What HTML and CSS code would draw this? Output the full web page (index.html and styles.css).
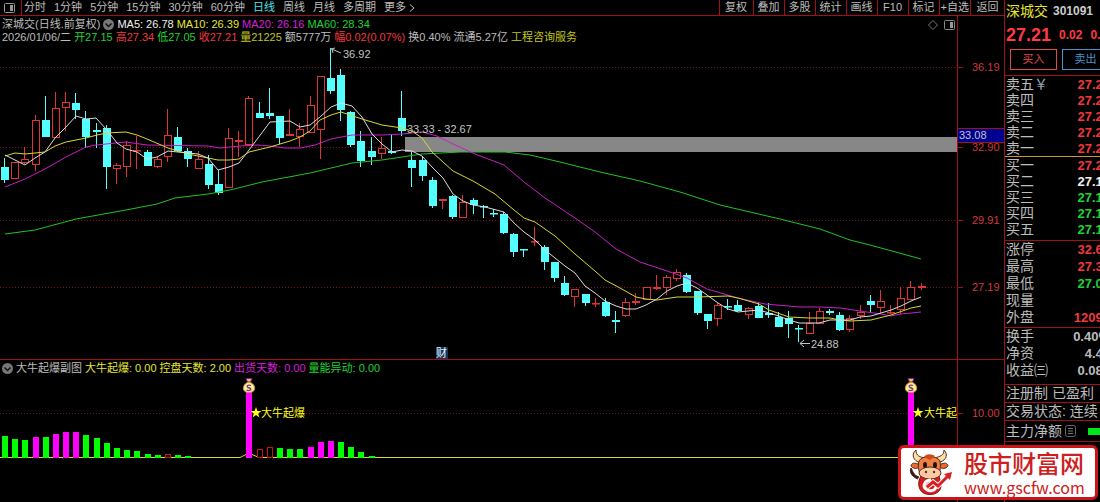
FILE: index.html
```html
<!DOCTYPE html>
<html lang="zh-CN">
<head>
    <meta charset="UTF-8">
    <meta name="viewport" content="width=device-width, initial-scale=1.0">
    <title>深城交 301091</title>
    <link rel="stylesheet" href="styles.css">
</head>
<body>

    <main class="main">
        <nav class="toolbar">
            <button class="panel-btn" aria-label="面板">
                <svg width="12" height="10" viewBox="0 0 12 10"><rect x="0.5" y="0.5" width="10" height="9" rx="1" fill="none" stroke="#999"/><rect x="6" y="2" width="3" height="6" fill="#999"/></svg>
            </button>
            <div class="periods">
                <button>分时</button>
                <button>1分钟</button>
                <button>5分钟</button>
                <button>15分钟</button>
                <button>30分钟</button>
                <button>60分钟</button>
                <button class="active">日线</button>
                <button>周线</button>
                <button>月线</button>
                <button>多周期</button>
                <button class="more">更多<svg width="6" height="8" viewBox="0 0 6 8"><path d="M1 0.5 L5 4 L1 7.5" fill="none" stroke="#bbb"/></svg></button>
            </div>
            <div class="tools">
                <button>复权</button>
                <button>叠加</button>
                <button>多股</button>
                <button>统计</button>
                <button>画线</button>
                <button>F10</button>
                <button>标记</button>
                <button>+自选</button>
                <button>返回</button>
            </div>
        </nav>

        <section class="chart">
            <div class="legend">
                <div class="legend-row">
                    <span>深城交(日线.前复权)</span>
                    <svg width="11" height="11" viewBox="0 0 11 11"><circle cx="5.5" cy="5.5" r="5.5" fill="#777"/><path d="M2.5 4.5 L5.5 7.5 L8.5 4.5" fill="none" stroke="#111" stroke-width="1.5"/></svg>
                    <span class="white">MA5: 26.78</span>
                    <span class="yellow">MA10: 26.39</span>
                    <span class="magenta">MA20: 26.16</span>
                    <span class="green">MA60: 28.34</span>
                </div>
                <div class="legend-row">
                    <span>2026/01/06/二</span>
                    <span class="green">开27.15</span>
                    <span class="red">高27.34</span>
                    <span class="green">低27.05</span>
                    <span class="red">收27.21</span>
                    <span class="olive">量21225</span>
                    <span>额5777万</span>
                    <span class="red">幅0.02(0.07%)</span>
                    <span>换0.40%</span>
                    <span>流通5.27亿</span>
                    <span class="olive">工程咨询服务</span>
                </div>
            </div>
            <svg class="plot" viewBox="0 16 1004 343">
                <g class="grid-lines">
                    <path d="M0 67.5H957M0 147.5H957M0 220.5H957M0 287.5H957"/>
                </g>
                <rect x="405" y="137" width="552" height="15" fill="#878787"/>
                <g id="candles"></g>
                <g id="averages"></g>
                <path class="note-line" d="M331.5 49 L341 53 M331 49 l4 -1 M332 49 l1 4"/>
                <text class="note" x="343" y="58">36.92</text>
                <text class="note" x="407" y="133">33.33 - 32.67</text>
                <path class="note-line" d="M800 343.5 H810 M804 340 L800 343.5 L804 347"/>
                <text class="note" x="811" y="348">24.88</text>
                <rect x="436" y="347" width="12" height="12" fill="#12365c"/>
                <text class="badge" x="436" y="357">财</text>
                <path d="M933 20.5 L937.5 25 L933 29.5 L928.5 25 Z" fill="none" stroke="#777"/>
                <rect x="944.5" y="20.5" width="10" height="9" rx="1" fill="none" stroke="#888"/>
                <rect x="950" y="22" width="3" height="6" fill="#999"/>
                <path class="axis-line" d="M957.5 16V359M958 67.5H963M958 147.5H963M958 220.5H963M958 287.5H963"/>
                <g class="axis-text">
                    <text x="972" y="71">36.19</text>
                    <text x="972" y="151">32.90</text>
                    <text x="972" y="224">29.91</text>
                    <text x="972" y="291">27.19</text>
                </g>
                <rect x="958" y="129" width="46" height="13" fill="#000090"/>
                <path class="axis-line" d="M958 128.5H1004M958 142.5H1004"/>
                <text class="note" x="959" y="139">33.08</text>
            </svg>
        </section>

        <section class="chart sub">
            <div class="legend">
                <div class="legend-row">
                    <svg width="11" height="11" viewBox="0 0 11 11"><circle cx="5.5" cy="5.5" r="5.5" fill="#777"/><path d="M2.5 4.5 L5.5 7.5 L8.5 4.5" fill="none" stroke="#111" stroke-width="1.5"/></svg>
                    <span>大牛起爆副图</span>
                    <span class="yellow">大牛起爆: 0.00</span>
                    <span class="yellow">控盘天数: 2.00</span>
                    <span class="magenta">出货天数: 0.00</span>
                    <span class="green">量能异动: 0.00</span>
                </div>
            </div>
            <svg class="plot" viewBox="0 360 1004 142">
                <defs>
                    <clipPath id="plot-clip"><rect x="0" y="360" width="957" height="142"/></clipPath>
                    <g id="bag">
                        <path d="M-3 0.5H3L1.5 4H-1.5Z" fill="#f5c542" stroke="#7b1fa2"/>
                        <path d="M-1.5 4.5 C-5 6 -6 9 -5.5 11.5 C-4.5 15.5 4.5 15.5 5.5 11.5 C6 9 5 6 1.5 4.5Z" fill="#ffe9a0" stroke="#c9962a"/>
                        <path d="M2 7.5 C-1 6.5 -3 8 -1 9.5 C1 10 3 11 1 12.2 C0 12.7 -1.5 12.5 -2.5 12" fill="none" stroke="#6a3b78" stroke-width="1.3"/>
                    </g>
                </defs>
                <g class="grid-lines"><path d="M0 413.5H957"/></g>
                <path d="M0 457.5H240L246 454.5H252L259 457.5H957" fill="none" stroke="#d8d830"/>
                <g id="bars"></g>
                <use href="#bag" x="249" y="378"/>
                <use href="#bag" x="911" y="378"/>
                <g class="signal" clip-path="url(#plot-clip)">
                    <path d="M256 407l1.4 4h4.1l-3.3 2.5 1.2 4-3.4-2.4-3.4 2.4 1.2-4-3.3-2.5h4.1z"/>
                    <text x="261" y="417">大牛起爆</text>
                    <path d="M918 407l1.4 4h4.1l-3.3 2.5 1.2 4-3.4-2.4-3.4 2.4 1.2-4-3.3-2.5h4.1z"/>
                    <text x="924" y="417">大牛起爆</text>
                </g>
                <path class="axis-line" d="M957.5 360V502M958 413.5H963"/>
                <g class="axis-text"><text x="972" y="417">10.00</text></g>
            </svg>
        </section>
    </main>

    <aside class="side">
        <div class="side-inner">
            <div class="stock"><span class="name">深城交</span><b>301091</b></div>
            <div class="price"><strong>27.21</strong><b>0.02</b><b>0.07%</b></div>
            <div class="trade">
                <button class="buy">买入</button>
                <button class="sell">卖出</button>
            </div>
            <dl class="book asks">
                <dt>卖五<i>￥</i></dt><dd class="red">27.26</dd>
                <dt>卖四</dt><dd class="red">27.25</dd>
                <dt>卖三</dt><dd class="red">27.24</dd>
                <dt>卖二</dt><dd class="red">27.23</dd>
                <dt>卖一</dt><dd class="red">27.22</dd>
            </dl>
            <dl class="book">
                <dt>买一</dt><dd class="red">27.21</dd>
                <dt>买二</dt><dd class="white">27.19</dd>
                <dt>买三</dt><dd class="green">27.18</dd>
                <dt>买四</dt><dd class="green">27.17</dd>
                <dt>买五</dt><dd class="green">27.16</dd>
            </dl>
            <dl class="book stats">
                <dt>涨停</dt><dd class="red">32.63</dd>
                <dt>最高</dt><dd class="red">27.34</dd>
                <dt>最低</dt><dd class="green">27.05</dd>
                <dt>现量</dt><dd></dd>
                <dt>外盘</dt><dd class="red">12093</dd>
            </dl>
            <dl class="book stats ratios">
                <dt>换手</dt><dd>0.40%</dd>
                <dt>净资</dt><dd>4.43</dd>
                <dt>收益㈢</dt><dd>0.083</dd>
            </dl>
            <p class="line">注册制 已盈利</p>
            <p class="line">交易状态: 连续</p>
            <p class="line flow">主力净额
                <svg width="12" height="12" viewBox="0 0 12 12"><rect x="0.5" y="0.5" width="10" height="11" rx="2" fill="none" stroke="#666"/><path d="M3 3.5H8M3 6H8M3 8.5H8" stroke="#777"/></svg>
                <span class="flow-bar"></span>
            </p>
        </div>
    </aside>

    <a class="brand" href="#">
        <svg width="46" height="48" viewBox="0 0 46 48">
            <path d="M9 30 C3 28 0 23 2 19 C4 22 4 26 10 28" fill="#3a1a12" stroke="#3a1a12"/>
            <path d="M9 13 C3 10 3 4 7 1 C7 7 11 8 16 9 L13 14Z" fill="#f7dfa8" stroke="#5a2a18"/>
            <path d="M31 13 C38 11 39 5 35 1 C35 7 31 7 26 9 L29 14Z" fill="#f7dfa8" stroke="#5a2a18"/>
            <path d="M9 15 C4 13 2 15 2 17 C4 20 8 20 11 18Z" fill="#e46b32" stroke="#5a2a18"/>
            <path d="M32 15 C37 13 39 15 39 17 C37 20 33 20 30 18Z" fill="#e46b32" stroke="#5a2a18"/>
            <path d="M12 27 C8 33 9 43 17 45 C25 47 33 43 32 35 L30 27Z" fill="#d51f1f" stroke="#8c1010"/>
            <path d="M10 12 C13 6 28 6 31 12 C32 18 31 22 30 25 L11 25 C9 20 9 16 10 12Z" fill="#f08040" stroke="#5a2a18"/>
            <path d="M15 8 C17 4 23 5 26 7 L21 11Z" fill="#c84a20"/>
            <ellipse cx="21" cy="24" rx="11" ry="6" fill="#fbc9a4" stroke="#5a2a18"/>
            <ellipse cx="16" cy="16" rx="2" ry="3" fill="#221111"/>
            <ellipse cx="26" cy="16" rx="2" ry="3" fill="#221111"/>
            <circle cx="17" cy="23" r="1.2" fill="#6b2a18"/><circle cx="25" cy="23" r="1.2" fill="#6b2a18"/>
            <path d="M22 31 C16 31 13 37 17 40 C20 43 26 42 27 38" fill="none" stroke="#fff" stroke-width="3"/>
            <path d="M18 38 L24 33 L29 37 L39 27" fill="none" stroke="#fff" stroke-width="5"/>
            <path d="M18 38 L24 33 L29 37 L39 27" fill="none" stroke="#d82020" stroke-width="3"/>
            <path d="M35 25 L43 23 L41 31Z" fill="#d82020"/>
        </svg>
        <span class="brand-text">
            <strong>股市财富网</strong>
            <span>www.gscfw.com</span>
        </span>
    </a>

    <script src="chart.js"></script>
</body>
</html>
```
FILE: styles.css
```css
* {
    box-sizing: border-box;
}

body {
    margin: 0;
    min-height: 100vh;
    display: grid;
    grid-template-columns: minmax(0, 1fr) 96px;
    background-color: #000;
    color: #bdbdbd;
    font-family: "Liberation Sans", "Noto Sans CJK SC", sans-serif;
    font-size: 11px;
    line-height: 13px;
    overflow: hidden;
    position: relative;
}

button {
    padding: 0;
    border: none;
    background: none;
    color: inherit;
    font: inherit;
    white-space: nowrap;
    cursor: pointer;
}

.white { color: #f0f0f0; }
.yellow { color: #e6e632; }
.olive { color: #c3c31e; }
.magenta { color: #d81ed8; }
.green { color: #1fd233; }
.red { color: #f0383e; }

/* toolbar */
.toolbar {
    display: flex;
    height: 16px;
    border-bottom: 1px solid #a01018;
}

.panel-btn {
    width: 22px;
    border-right: 1px solid #a01018;
    display: flex;
    align-items: center;
    padding-left: 4px;
}

.periods {
    flex: 1;
    display: flex;
    gap: 8px;
    padding-left: 2px;
}

.periods .active {
    color: #4fe3e6;
}

.more {
    display: flex;
    align-items: center;
    gap: 3px;
}

.tools {
    display: flex;
}

.tools button {
    min-width: 31px;
    border-left: 1px solid #a01018;
    padding: 0 1px;
}

.tools button:first-child,
.tools button:last-child {
    min-width: 34px;
}

/* charts */
.chart {
    position: relative;
}

.sub {
    border-top: 1px solid #a01018;
}

.plot {
    display: block;
    width: 100%;
    height: auto;
}

.legend {
    position: absolute;
    left: 2px;
    top: 2px;
    white-space: nowrap;
}

.legend-row {
    display: flex;
    align-items: center;
    gap: 3px;
}

.grid-lines {
    stroke: #7a1418;
    stroke-dasharray: 1 2;
}

.axis-line {
    stroke: #a01018;
    fill: none;
}

.axis-text {
    fill: #d0393f;
}

.note {
    fill: #c4c4c4;
}

.note-line {
    stroke: #c4c4c4;
    fill: none;
}

.badge {
    fill: #e8f4ff;
}

.signal {
    fill: #ffff1e;
}

.candle-up {
    fill: #000;
    stroke: #e03338;
}

.candle-down {
    fill: #54ffff;
    stroke: #54ffff;
}

.average {
    fill: none;
    stroke-width: 1;
}

/* quote panel */
.side {
    border-left: 1px solid #a01018;
    overflow: hidden;
}

.side-inner {
    width: 105px;
}

.stock {
    display: flex;
    align-items: center;
    gap: 5px;
    height: 23px;
    padding-left: 1px;
}

.stock .name {
    color: #e6e632;
    font-size: 14px;
}

.stock b {
    font-size: 12px;
    color: #ccc;
}

.price {
    display: flex;
    align-items: center;
    gap: 8px;
    height: 24px;
    padding-left: 1px;
    color: #ff3a40;
    font-size: 12px;
}

.price strong {
    font-size: 18px;
}

.trade {
    display: flex;
    gap: 5px;
    padding: 2px 0 5px 5px;
    border-bottom: 1px solid #a01018;
}

.trade button {
    flex: none;
    width: 47px;
    height: 21px;
    border: 1px solid;
}

.buy {
    color: #e0494c;
}

.sell {
    color: #4a90cc;
}

.book {
    display: grid;
    grid-template-columns: auto 1fr;
    grid-auto-rows: 16px;
    align-items: center;
    margin: 0;
    padding: 0 0 3px 1px;
    border-bottom: 1px solid #a01018;
    font-size: 14px;
}

.asks {
    padding-bottom: 0;
    border-color: #c89632;
}

.book i {
    font-style: normal;
    color: #9ab;
}

.book dd {
    margin: 0;
    text-align: right;
    font-size: 13px;
    font-weight: bold;
}

.stats {
    grid-auto-rows: 17px;
    padding-bottom: 1px;
}

.ratios {
    padding-bottom: 5px;
}

.line {
    margin: 0;
    height: 18px;
    padding-left: 1px;
    border-bottom: 1px solid #a01018;
    font-size: 14px;
    line-height: 17px;
    white-space: nowrap;
}

.flow {
    display: flex;
    align-items: center;
    gap: 3px;
    height: 21px;
}

.flow-bar {
    width: 16px;
    height: 7px;
    margin-left: 8px;
    background-color: #00e61e;
}

/* site badge */
.brand {
    position: absolute;
    right: 2px;
    bottom: 2px;
    display: flex;
    align-items: center;
    gap: 9px;
    width: 200px;
    height: 55px;
    padding-left: 8px;
    border: 3px solid #cc1418;
    border-radius: 6px;
    background-color: #fff;
    color: #cc2020;
    text-decoration: none;
}

.brand-text {
    display: flex;
    flex-direction: column;
    font-family: "Noto Sans CJK SC", sans-serif;
    font-size: 16px;
    line-height: 20px;
}

.brand-text strong {
    font-size: 24px;
    font-weight: 500;
    line-height: 28px;
}
```
FILE: chart.js
```javascript
const NS = 'http://www.w3.org/2000/svg';
const FIRST = 5;
const STEP = 10.185;

// direction, high, top, bottom, low
const candles = [
    ['d', 158, 167, 180, 183], ['u', 162, 162, 179, 179], ['u', 147, 159, 163, 164], ['u', 115, 120, 165, 171],
    ['d', 96, 120, 137, 137], ['u', 92, 108, 138, 138], ['u', 92, 102, 108, 131], ['d', 93, 103, 110, 119],
    ['d', 111, 119, 137, 148], ['d', 123, 130, 132, 148], ['d', 125, 128, 167, 189], ['u', 163, 165, 169, 184],
    ['u', 141, 145, 167, 177], ['u', 136, 150, 151, 169], ['d', 150, 152, 166, 166], ['u', 157, 159, 167, 168],
    ['u', 109, 135, 157, 162], ['d', 127, 137, 151, 152], ['d', 148, 151, 159, 167], ['u', 151, 159, 169, 169],
    ['d', 155, 164, 185, 189], ['d', 170, 184, 193, 195], ['u', 128, 138, 188, 188], ['u', 131, 140, 142, 157],
    ['u', 96, 98, 145, 145], ['d', 102, 113, 118, 118], ['d', 88, 113, 116, 119], ['d', 116, 116, 138, 144],
    ['u', 109, 134, 136, 136], ['u', 123, 129, 137, 147], ['u', 96, 105, 133, 133], ['u', 76, 76, 130, 159],
    ['d', 48, 78, 91, 94], ['d', 69, 75, 110, 121], ['d', 111, 112, 145, 147], ['d', 131, 141, 161, 167],
    ['d', 137, 151, 157, 165], ['u', 137, 148, 154, 159], ['d', 135, 151, 153, 154], ['d', 91, 118, 131, 136],
    ['d', 152, 160, 168, 187], ['d', 157, 160, 176, 181], ['d', 177, 180, 206, 208], ['u', 199, 199, 201, 209],
    ['d', 195, 196, 217, 219], ['u', 195, 202, 218, 218], ['d', 198, 200, 205, 214], ['d', 205, 206, 207, 218],
    ['d', 209, 213, 214, 217], ['d', 212, 214, 233, 234], ['d', 233, 234, 252, 257], ['d', 249, 249, 250, 257],
    ['u', 227, 241, 242, 246], ['d', 245, 247, 262, 270], ['d', 262, 262, 278, 282], ['d', 276, 283, 295, 296],
    ['u', 289, 289, 297, 307], ['d', 294, 294, 303, 306], ['u', 298, 303, 304, 307], ['d', 298, 302, 316, 317],
    ['d', 311, 320, 322, 333], ['u', 298, 302, 316, 317], ['u', 293, 301, 303, 305], ['u', 287, 287, 300, 300],
    ['u', 275, 287, 289, 290], ['u', 275, 277, 288, 295], ['u', 269, 272, 279, 281], ['d', 273, 275, 292, 293],
    ['d', 291, 291, 313, 315], ['d', 314, 314, 321, 329], ['u', 303, 305, 319, 326], ['d', 299, 306, 307, 310],
    ['d', 300, 305, 311, 312], ['u', 307, 308, 315, 319], ['d', 303, 306, 318, 318], ['d', 303, 313, 315, 318],
    ['d', 312, 317, 327, 327], ['d', 311, 318, 324, 338], ['d', 325, 328, 329, 342], ['u', 312, 323, 334, 334],
    ['u', 308, 311, 324, 324], ['d', 309, 311, 313, 315], ['d', 312, 315, 330, 331], ['u', 315, 318, 330, 332],
    ['u', 305, 312, 316, 319], ['d', 295, 301, 305, 312], ['u', 290, 301, 308, 313], ['u', 305, 312, 313, 314],
    ['u', 287, 298, 310, 314], ['u', 281, 287, 300, 300], ['u', 283, 286, 288, 290]
];

const averages = [
    ['#22c322', '5,234 35,230 76,219 126,210 157,204 175,198 208,194 230,190 262,182 310,173 352,163 382,160 402,157 422,154 460,152 505,152 530,155 560,162 600,172 640,181 680,192 720,205 780,219 820,229 850,240 870,245 921,259'],
    ['#c81ec8', '5,187 25,179 45,169 66,157 86,147 96,145 126,142 147,145 208,146 220,148 240,146 258,145 270,146 285,148 300,148 315,145 331,139 352,135 382,135 402,134 422,132 437,136 453,144 475,154 504,165 524,182 545,198 575,218 595,232 616,249 640,262 667,271 687,278 707,289 738,298 765,304 800,307 820,307 840,308 860,311 881,314 891,316 901,314 921,312'],
    ['#d8d832', '5,156 15,153 25,154 45,152 55,146 66,142 86,138 97,135 107,133 126,132 137,135 147,139 168,148 188,154 208,158 218,160 229,160 239,159 249,152 270,147 290,141 300,137 310,131 320,120 331,115 341,112 362,119 382,125 402,128 412,131 422,138 432,152 443,162 453,171 473,181 495,194 514,210 524,218 535,222 555,236 575,254 595,271 605,280 620,288 636,297 646,299 657,300 677,297 697,297 728,296 738,298 759,304 769,310 789,317 809,318 830,318 840,320 850,321 871,320 891,315 911,308 921,306'],
    ['#dcdcdc', '5,155 15,160 25,165 35,158 45,152 55,138 66,127 76,116 86,119 96,118 107,130 117,143 126,149 137,152 147,159 157,157 168,151 178,152 188,153 198,154 208,158 218,170 229,167 239,163 249,150 270,122 290,121 300,127 310,125 320,117 331,107 341,103 352,106 362,117 372,134 382,144 392,152 402,150 412,151 422,156 432,167 443,178 453,194 463,201 473,205 485,207 504,212 514,223 524,232 535,240 545,250 555,258 565,266 575,273 585,286 595,293 605,301 616,306 626,309 636,309 646,305 657,299 667,291 677,286 687,283 697,288 707,295 718,303 728,309 738,312 748,311 759,310 769,313 779,316 789,320 799,323 819,323 830,320 850,320 860,317 871,316 881,313 891,310 901,306 911,301 921,297']
];

// index, colour, top
const bars = [
    [0, 'g', 436], [1, 'g', 439], [2, 'g', 440], [3, 'm', 437], [4, 'g', 437], [5, 'm', 434], [6, 'm', 432],
    [7, 'm', 432], [8, 'g', 435], [9, 'g', 438], [10, 'g', 443], [11, 'g', 448], [12, 'g', 450], [13, 'g', 451],
    [14, 'g', 454], [15, 'g', 455], [16, 'r', 454], [17, 'g', 455], [18, 'g', 456], [24, 'm', 392],
    [25, 'r', 449], [26, 'r', 447], [27, 'g', 448], [28, 'g', 449], [29, 'g', 449], [30, 'm', 447],
    [31, 'm', 442], [32, 'm', 441], [33, 'g', 442], [34, 'g', 447], [35, 'g', 452], [36, 'g', 456], [89, 'm', 392]
];

function add(parent, name, attrs) {
    const el = document.createElementNS(NS, name);
    for (const key in attrs) {
        el.setAttribute(key, attrs[key]);
    }
    parent.appendChild(el);
}

const candleGroup = document.getElementById('candles');
candles.forEach(function (c, i) {
    const x = Math.round(FIRST + STEP * i) - 0.5;
    const type = c[0] === 'u' ? 'candle-up' : 'candle-down';
    add(candleGroup, 'path', { class: type, d: `M${x} ${c[1]}V${c[4]}` });
    add(candleGroup, 'rect', { class: type, x: x - 3, y: c[2] + 0.5, width: 7, height: Math.max(c[3] - c[2] - 1, 0.5) });
});

const averageGroup = document.getElementById('averages');
averages.forEach(function (a) {
    add(averageGroup, 'polyline', { class: 'average', stroke: a[0], points: a[1] });
});

const barGroup = document.getElementById('bars');
bars.forEach(function (b) {
    const x = Math.round(FIRST + STEP * b[0]) - 3;
    if (b[1] === 'r') {
        add(barGroup, 'rect', { x: x + 0.5, y: b[2] + 0.5, width: 5, height: 457 - b[2], fill: '#000', stroke: '#c81419' });
    } else {
        add(barGroup, 'rect', { x: x, y: b[2], width: 6, height: 458 - b[2], fill: b[1] === 'g' ? '#00ff00' : '#ff00ff' });
    }
});
```
